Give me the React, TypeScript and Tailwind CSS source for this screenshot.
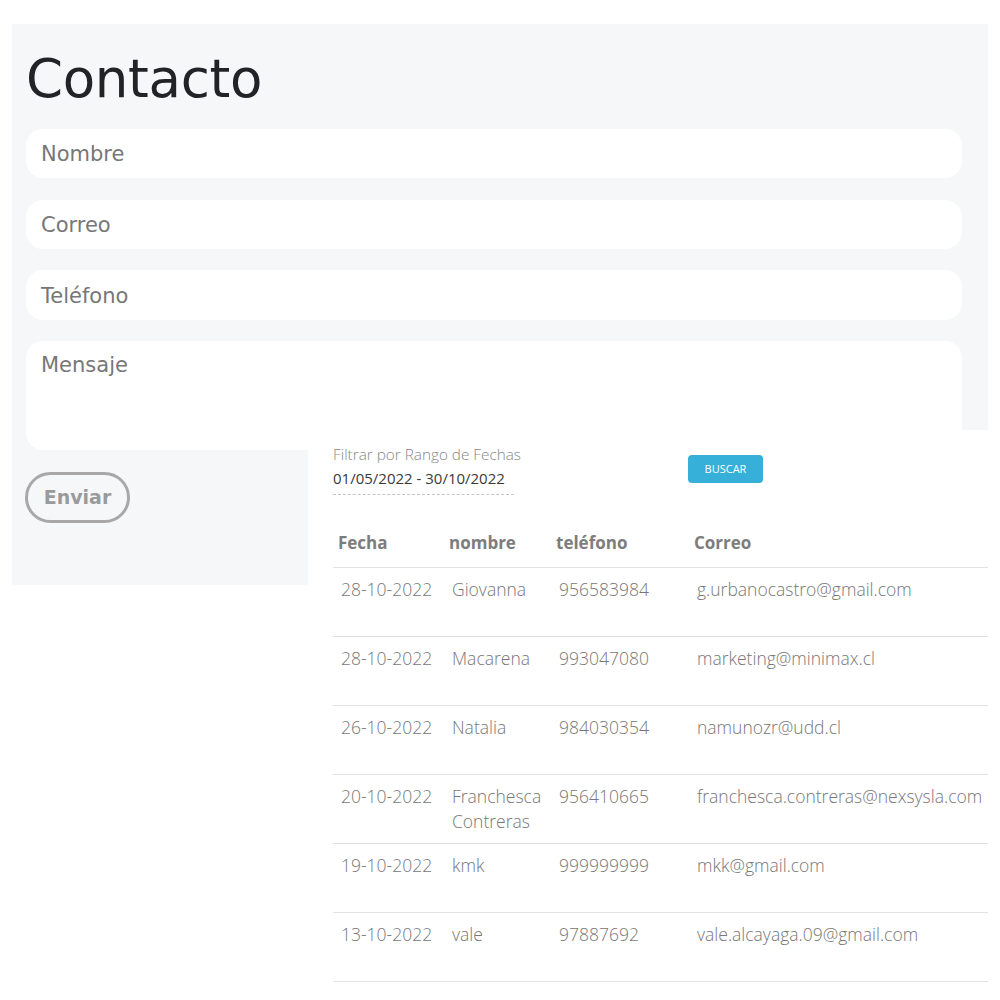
import React from "react";

const rows = [
  { fecha: "28-10-2022", nombre: "Giovanna", tel: "956583984", correo: "g.urbanocastro@gmail.com" },
  { fecha: "28-10-2022", nombre: "Macarena", tel: "993047080", correo: "marketing@minimax.cl" },
  { fecha: "26-10-2022", nombre: "Natalia", tel: "984030354", correo: "namunozr@udd.cl" },
  { fecha: "20-10-2022", nombre: "Franchesca Contreras", tel: "956410665", correo: "franchesca.contreras@nexsysla.com" },
  { fecha: "19-10-2022", nombre: "kmk", tel: "999999999", correo: "mkk@gmail.com" },
  { fecha: "13-10-2022", nombre: "vale", tel: "97887692", correo: "vale.alcayaga.09@gmail.com" },
];

const form = { fontFamily: '"DejaVu Sans", sans-serif' };
const open = { fontFamily: '"Open Sans", sans-serif' };

export default function App() {
  return (
    <div className="relative h-[1000px] w-[1000px] overflow-hidden bg-white">
      <div className="pt-[24px] pl-[12px]">
        <div className="h-[561px] w-[976px] bg-[#f6f7f9] pt-[28px] pl-[14px] pr-[26px]" style={form}>
          <h1 className="h-[53px] text-[53px] leading-[53px] font-normal text-[#222326] tracking-[-0.3px]">Contacto</h1>
          <div className="mt-[24px] flex flex-col">
            <div className="flex h-[49px] items-center rounded-[17px] bg-white pl-[15px] pt-[3px] text-[21px] text-[#777]">Nombre</div>
            <div className="mt-[22px] flex h-[49px] items-center rounded-[17px] bg-white pl-[15px] pt-[3px] text-[21px] text-[#777]">Correo</div>
            <div className="mt-[21px] flex h-[50px] items-center rounded-[17px] bg-white pl-[15px] pt-[3px] text-[21px] text-[#777]">Teléfono</div>
            <div className="mt-[21px] h-[109px] rounded-[17px] bg-white pl-[15px] pt-[12px] text-[21px] leading-[24px] text-[#777]">Mensaje</div>
          </div>
          <div className="mt-[22px] flex h-[51px] w-[105px] -ml-[1px] items-center justify-center rounded-full border-[3px] border-[#a8a8a8] text-[19px] font-bold text-[#9a9a9a]">
            Enviar
          </div>
        </div>
      </div>

      <div className="absolute left-[308px] top-[430px] right-0 bottom-0 bg-white pl-[25px] pr-[12px] pt-[14px]" style={open}>
        <div className="flex items-start">
          <div className="w-[181px] border-b border-dashed border-[#c4c4c4] pb-[5px]">
            <div className="text-[15.3px] leading-[20px] font-light text-[#888] whitespace-nowrap">Filtrar por Rango de Fechas</div>
            <div className="mt-[3px] text-[15px] leading-[22px] text-[#3a3a3a] whitespace-nowrap">01/05/2022 - 30/10/2022</div>
          </div>
          <div className="ml-[174px] mt-[11px] flex h-[28px] w-[75px] items-center justify-center rounded-[4px] bg-[#36b0d9] text-[11px] text-white">
            BUSCAR
          </div>
        </div>

        <div className="mt-[29px] w-[655px]">
          <div className="grid grid-cols-[111px_107px_138px_1fr] border-b border-[#e2e2e2] pt-[7px] pb-[12px] text-[17px] leading-[24px] font-bold text-[#7d7d7d]">
            <div className="pl-[5px]">Fecha</div>
            <div className="pl-[5px]">nombre</div>
            <div className="pl-[5px]">teléfono</div>
            <div className="pl-[5px]">Correo</div>
          </div>
          {rows.map((r, i) => (
            <div
              key={i}
              className="grid h-[69px] grid-cols-[111px_107px_138px_1fr] border-b border-[#e2e2e2] pt-[9px] text-[17.5px] leading-[25px] font-light text-[#777]"
            >
              <div className="pl-[8px] whitespace-nowrap">{r.fecha}</div>
              <div className="pl-[8px]">{r.nombre}</div>
              <div className="pl-[8px] whitespace-nowrap">{r.tel}</div>
              <div className="pl-[8px] whitespace-nowrap">{r.correo}</div>
            </div>
          ))}
        </div>
      </div>
    </div>
  );
}
